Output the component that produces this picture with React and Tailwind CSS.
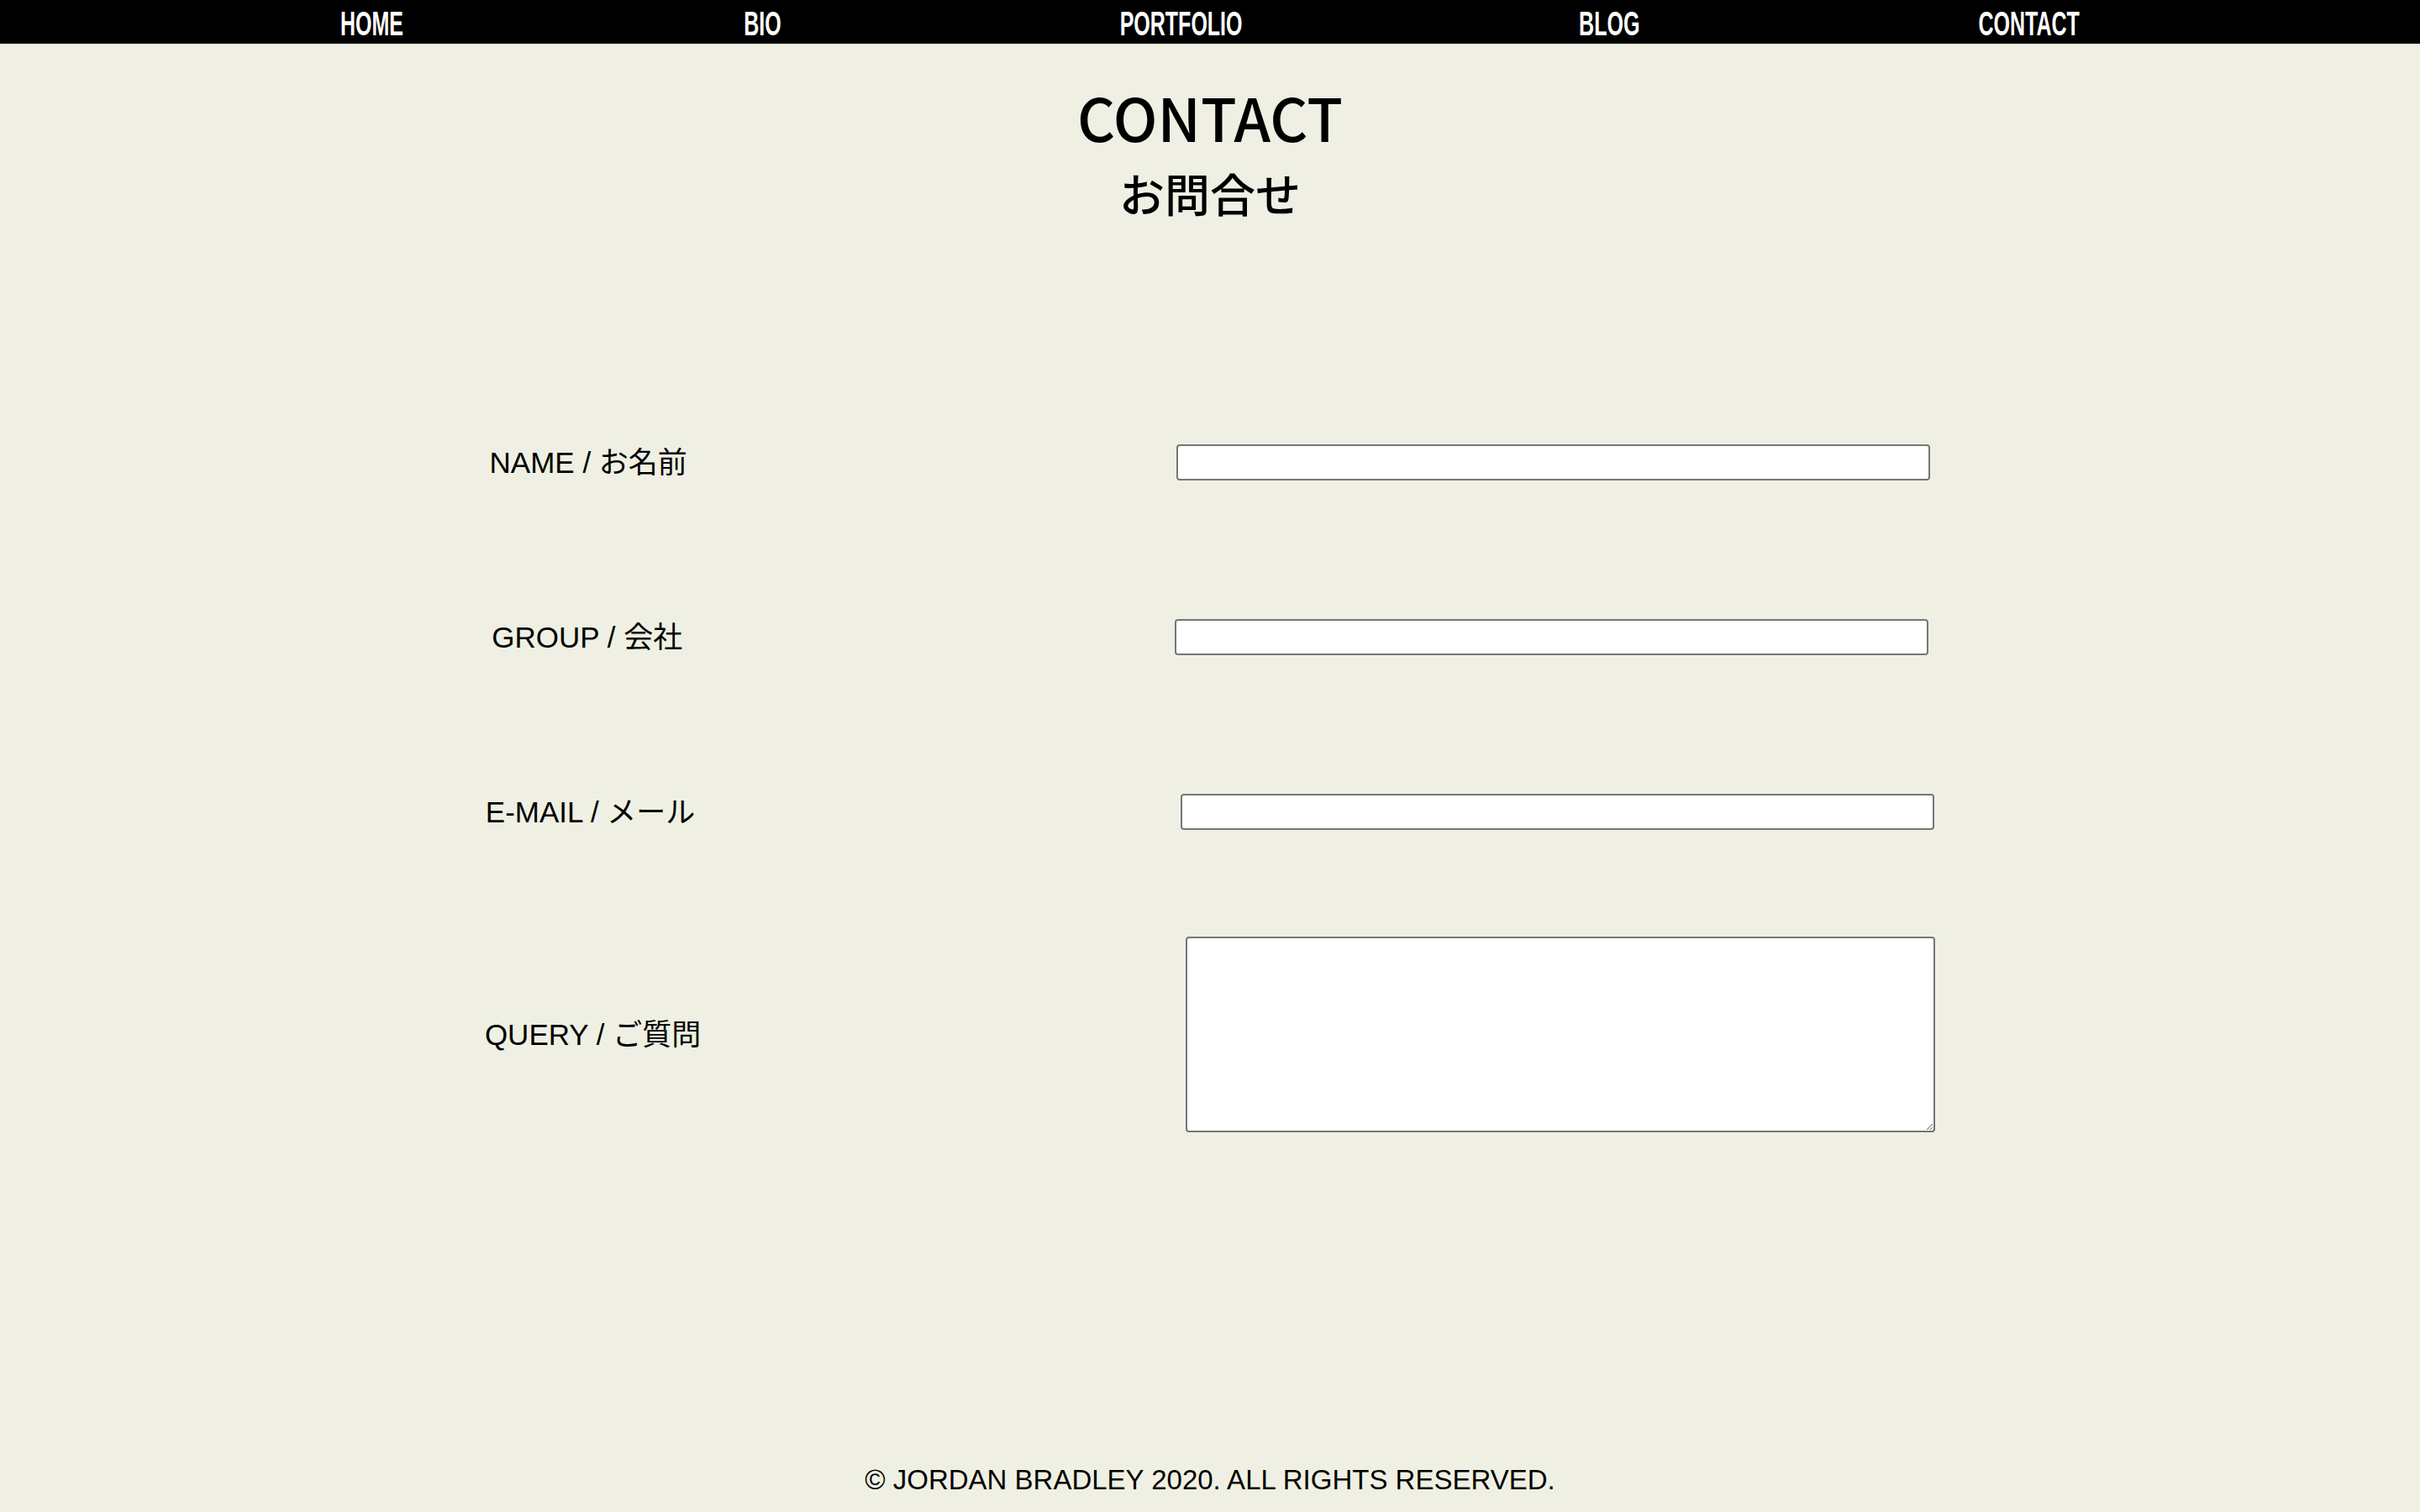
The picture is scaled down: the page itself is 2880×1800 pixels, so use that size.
import React from 'react';

const navItems = [
  { label: 'HOME', width: 'w-[75px]' },
  { label: 'BIO', width: 'w-[44px]' },
  { label: 'PORTFOLIO', width: 'w-[142px]' },
  { label: 'BLOG', width: 'w-[68px]' },
  { label: 'CONTACT', width: 'w-[120px]' },
];

const fields = [
  { label: 'NAME / お名前', spacing: 'mt-0' },
  { label: 'GROUP / 会社', spacing: 'mt-[165px]' },
  { label: 'E-MAIL / メール', spacing: 'mt-[165px]' },
];

function Field({ label, spacing, children }) {
  return (
    <div className={`flex w-full items-center justify-evenly ${spacing}`}>
      <label className="whitespace-nowrap text-[35px] leading-[40px] text-black">{label}</label>
      {children}
    </div>
  );
}

export default function App() {
  return (
    <div className="flex min-h-screen flex-col bg-[#eff0e3] font-['Liberation_Sans','Noto_Sans_CJK_JP',sans-serif] text-black">
      <nav className="flex h-[52px] items-center justify-evenly bg-black pt-[6px]">
        {navItems.map((item) => (
          <a key={item.label} href="#" className={`flex justify-center ${item.width}`}>
            <span className="inline-block scale-x-[0.61] whitespace-nowrap text-[41px] font-bold text-white">
              {item.label}
            </span>
          </a>
        ))}
      </nav>

      <header className="flex flex-col items-center font-['Noto_Sans_CJK_JP',sans-serif]">
        <h1 className="mt-[51px] text-[70px] font-medium leading-[72px]">CONTACT</h1>
        <h2 className="mt-[28px] text-[54px] font-medium leading-[54px]">お問合せ</h2>
      </header>

      <form className="mt-[272px] flex w-full flex-col">
        {fields.map((field) => (
          <Field key={field.label} label={field.label} spacing={field.spacing}>
            <input
              type="text"
              className="h-[43px] w-[897px] rounded-[4px] border-2 border-[#767676] bg-white"
            />
          </Field>
        ))}
        <Field label="QUERY / ご質問" spacing="mt-[127px]">
          <textarea className="h-[233px] w-[892px] rounded-[4px] border-2 border-[#767676] bg-white" />
        </Field>
      </form>

      <footer className="mt-auto pb-[14px] text-center text-[33px]">
        © JORDAN BRADLEY 2020. ALL RIGHTS RESERVED.
      </footer>
    </div>
  );
}
